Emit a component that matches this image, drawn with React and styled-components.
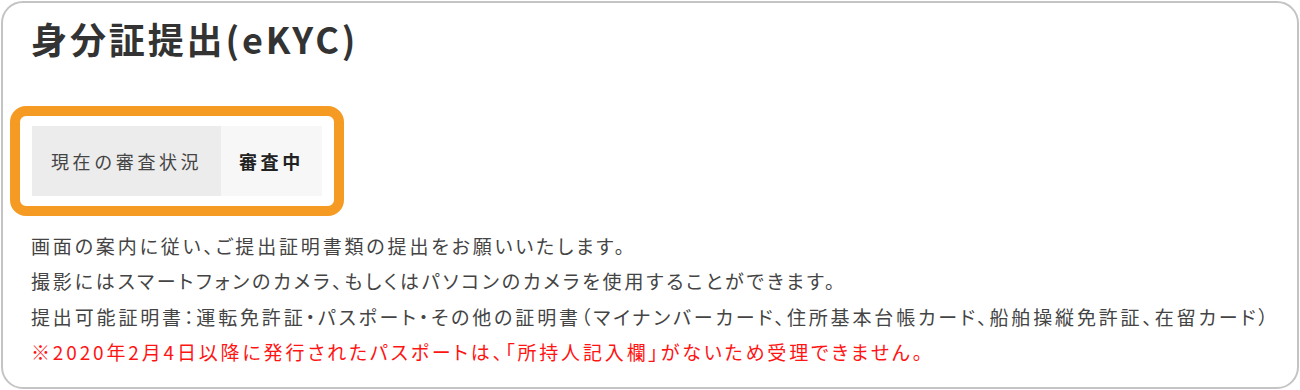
import styled, { createGlobalStyle } from "styled-components";

const GlobalStyle = createGlobalStyle`
    html, body {
        margin: 0;
        padding: 0;
        background: #ffffff;
    }
    * {
        box-sizing: border-box;
    }
`;

const notes = [
    "画面の案内に従い、ご提出証明書類の提出をお願いいたします。",
    "撮影にはスマートフォンのカメラ、もしくはパソコンのカメラを使用することができます。",
    "提出可能証明書：運転免許証・パスポート・その他の証明書（マイナンバーカード、住所基本台帳カード、船舶操縦免許証、在留カード）",
];

function App() {
    return (
        <>
            <GlobalStyle />
            <Card>
                <Title>身分証提出(eKYC)</Title>
                <Highlight>
                    <StatusTable>
                        <LabelCell>現在の審査状況</LabelCell>
                        <ValueCell>審査中</ValueCell>
                    </StatusTable>
                </Highlight>
                <Notes>
                    {notes.map((line) => (
                        <Note key={line}>{line}</Note>
                    ))}
                    <Note $warning>
                        ※2020年2月4日以降に発行されたパスポートは、「所持人記入欄」がないため受理できません。
                    </Note>
                </Notes>
            </Card>
        </>
    );
}

export default App;

const Card = styled.div`
    margin: 1px;
    height: 388px;
    border: 2px solid #c4c4c4;
    border-radius: 22px;
    padding: 7px 28px 0 28px;
    display: flex;
    flex-direction: column;
    align-items: flex-start;
    font-family: "Noto Sans CJK JP", "Noto Sans", sans-serif;
    color: #444;
`;

const Title = styled.h1`
    margin: 0;
    font-size: 36px;
    font-weight: 700;
    line-height: 56px;
    letter-spacing: 0.08em;
    color: #333;
`;

const Highlight = styled.div`
    margin-top: 40px;
    margin-left: -21px;
    border: 10px solid #f59b23;
    border-radius: 16px;
    padding: 10px 12px;
    background: #fff;
`;

const StatusTable = styled.div`
    display: flex;
    height: 70px;
`;

const LabelCell = styled.div`
    display: flex;
    align-items: center;
    width: 189px;
    padding-left: 19px;
    background: #ececec;
    font-size: 18px;
    letter-spacing: 0.2em;
    color: #444;
`;

const ValueCell = styled.div`
    display: flex;
    align-items: center;
    width: 101px;
    padding-left: 18px;
    background: #f7f7f7;
    font-size: 18px;
    font-weight: 700;
    letter-spacing: 0.2em;
    color: #222;
`;

const Notes = styled.div`
    margin-top: 12px;
    display: flex;
    flex-direction: column;
`;

const Note = styled.p`
    margin: 0;
    font-size: 19px;
    line-height: 35.3px;
    letter-spacing: 0.15em;
    font-feature-settings: "palt";
    color: ${(props) => (props.$warning ? "#ff1414" : "#444")};
    white-space: nowrap;
`;
